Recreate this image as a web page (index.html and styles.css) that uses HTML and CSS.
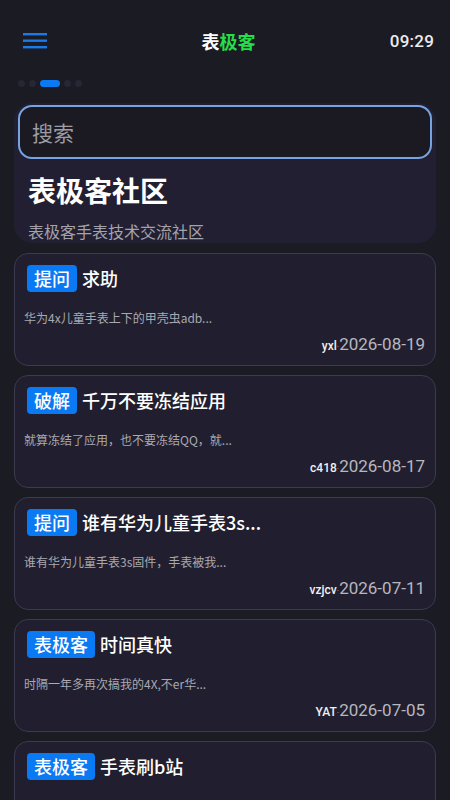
FILE: index.html
```html
<!DOCTYPE html>
<html lang="zh">
<head>
<meta charset="utf-8">
<link rel="stylesheet" href="styles.css">
</head>
<body>
<div class="topbar">
  <div class="menu">
    <svg width="24" height="16" viewBox="0 0 24 16"><rect x="0" y="0" width="24" height="2.4" fill="#1a7be8"/><rect x="0" y="6.5" width="24" height="2.4" fill="#1a7be8"/><rect x="0" y="13" width="24" height="2.4" fill="#1a7be8"/></svg>
  </div>
  <div class="brand">表<span class="green">极客</span></div>
  <div class="time">09:29</div>
</div>
<div class="dots">
  <span class="dot"></span><span class="dot"></span><span class="pill"></span><span class="dot"></span><span class="dot"></span>
</div>
<div class="hero">
  <div class="search">搜索</div>
  <div class="hero-title">表极客社区</div>
  <div class="hero-sub">表极客手表技术交流社区</div>
</div>
<div class="list">
  <div class="card">
    <div class="head"><span class="tag">提问</span><span class="title">求助</span></div>
    <div class="excerpt">华为4x儿童手表上下的甲壳虫adb...</div>
    <div class="foot"><span class="user">yxl</span><span class="sep">·</span><span class="date">2026-08-19</span></div>
  </div>
  <div class="card">
    <div class="head"><span class="tag">破解</span><span class="title">千万不要冻结应用</span></div>
    <div class="excerpt">就算冻结了应用，也不要冻结QQ，就...</div>
    <div class="foot"><span class="user">c418</span><span class="sep">·</span><span class="date">2026-08-17</span></div>
  </div>
  <div class="card">
    <div class="head"><span class="tag">提问</span><span class="title">谁有华为儿童手表3s...</span></div>
    <div class="excerpt">谁有华为儿童手表3s固件，手表被我...</div>
    <div class="foot"><span class="user">vzjcv</span><span class="sep">·</span><span class="date">2026-07-11</span></div>
  </div>
  <div class="card">
    <div class="head"><span class="tag">表极客</span><span class="title">时间真快</span></div>
    <div class="excerpt">时隔一年多再次搞我的4X,不er华...</div>
    <div class="foot"><span class="user">YAT</span><span class="sep">·</span><span class="date">2026-07-05</span></div>
  </div>
  <div class="card">
    <div class="head"><span class="tag">表极客</span><span class="title">手表刷b站</span></div>
    <div class="excerpt">现在华为的儿童手表也能刷b站了...</div>
    <div class="foot"><span class="user">abc</span><span class="sep">·</span><span class="date">2026-07-01</span></div>
  </div>
</div>
</body>
</html>
```
FILE: styles.css
```css
html, body {
  margin: 0;
  padding: 0;
  background: #1b1b23;
  font-family: Roboto, "Noto Sans CJK SC", "Noto Sans", sans-serif;
  color: #ffffff;
  overflow: hidden;
  height: 800px;
}

.topbar {
  height: 80px;
  display: grid;
  grid-template-columns: 1fr auto 1fr;
  align-items: center;
  padding: 2px 16px 0 23px;
  box-sizing: border-box;
}

.menu {
  display: flex;
  align-items: center;
  height: 16px;
}

.menu svg { display: block; }

.brand {
  font-family: "Noto Sans CJK SC", sans-serif;
  font-size: 18px;
  font-weight: 700;
  color: #ffffff;
  line-height: 24px;
}

.green { color: #24df47; }

.time {
  justify-self: end;
  font-size: 17px;
  font-weight: 500;
  color: #ececec;
  letter-spacing: 0.2px;
}

.dots {
  display: flex;
  align-items: center;
  gap: 4px;
  height: 7px;
  padding-left: 18px;
}

.dot {
  width: 7px;
  height: 7px;
  border-radius: 50%;
  background: #262634;
}

.pill {
  width: 20px;
  height: 7px;
  border-radius: 4px;
  background: #0b79f2;
}

.hero {
  margin: 16px 14px 0;
  height: 140px;
  background: #221f32;
  border-radius: 18px;
  padding: 2px 4px 0;
  box-sizing: border-box;
  overflow: hidden;
}

.search {
  height: 54px;
  box-sizing: border-box;
  border: 2px solid #78a3e3;
  border-radius: 14px;
  background: #1b1a23;
  color: #9c9ca2;
  font-family: "Noto Sans CJK SC", sans-serif;
  font-size: 21px;
  display: flex;
  align-items: center;
  padding-left: 12px;
}

.hero-title {
  margin-top: 13px;
  padding-left: 10px;
  font-family: "Noto Sans CJK SC", sans-serif;
  font-size: 28px;
  font-weight: 700;
  line-height: 36px;
}

.hero-sub {
  margin-top: 12px;
  padding-left: 10px;
  font-family: "Noto Sans CJK SC", sans-serif;
  font-size: 16px;
  line-height: 22px;
  color: #a3a3ab;
}

.list {
  margin: 10px 14px 0;
  display: flex;
  flex-direction: column;
  gap: 9px;
}

.card {
  height: 113px;
  flex-shrink: 0;
  box-sizing: border-box;
  background: #211f2f;
  border: 1.5px solid #3b3a4e;
  border-radius: 14px;
  padding: 10.5px 10px 0 9px;
  display: flex;
  flex-direction: column;
}

.head {
  display: flex;
  align-items: center;
  height: 27px;
  padding-left: 3px;
  font-family: "Noto Sans CJK SC", sans-serif;
}

.tag {
  background: #0a7af4;
  color: #ffffff;
  font-size: 18px;
  font-weight: 500;
  line-height: 27px;
  padding: 0 7px;
  border-radius: 4px;
}

.title {
  margin-left: 5px;
  font-size: 18px;
  font-weight: 500;
  color: #ffffff;
}

.excerpt {
  margin-top: 17px;
  font-family: "Noto Sans CJK SC", sans-serif;
  font-size: 12px;
  line-height: 17px;
  color: #a9a9b1;
}

.foot {
  margin-top: 6px;
  display: flex;
  justify-content: flex-end;
  align-items: baseline;
  line-height: 24px;
}

.user {
  font-size: 12px;
  font-weight: 500;
  color: #f0f0f0;
}

.sep {
  font-size: 9px;
  color: #aaaaaa;
}

.date {
  font-size: 17px;
  color: #b7b7bf;
}
```
